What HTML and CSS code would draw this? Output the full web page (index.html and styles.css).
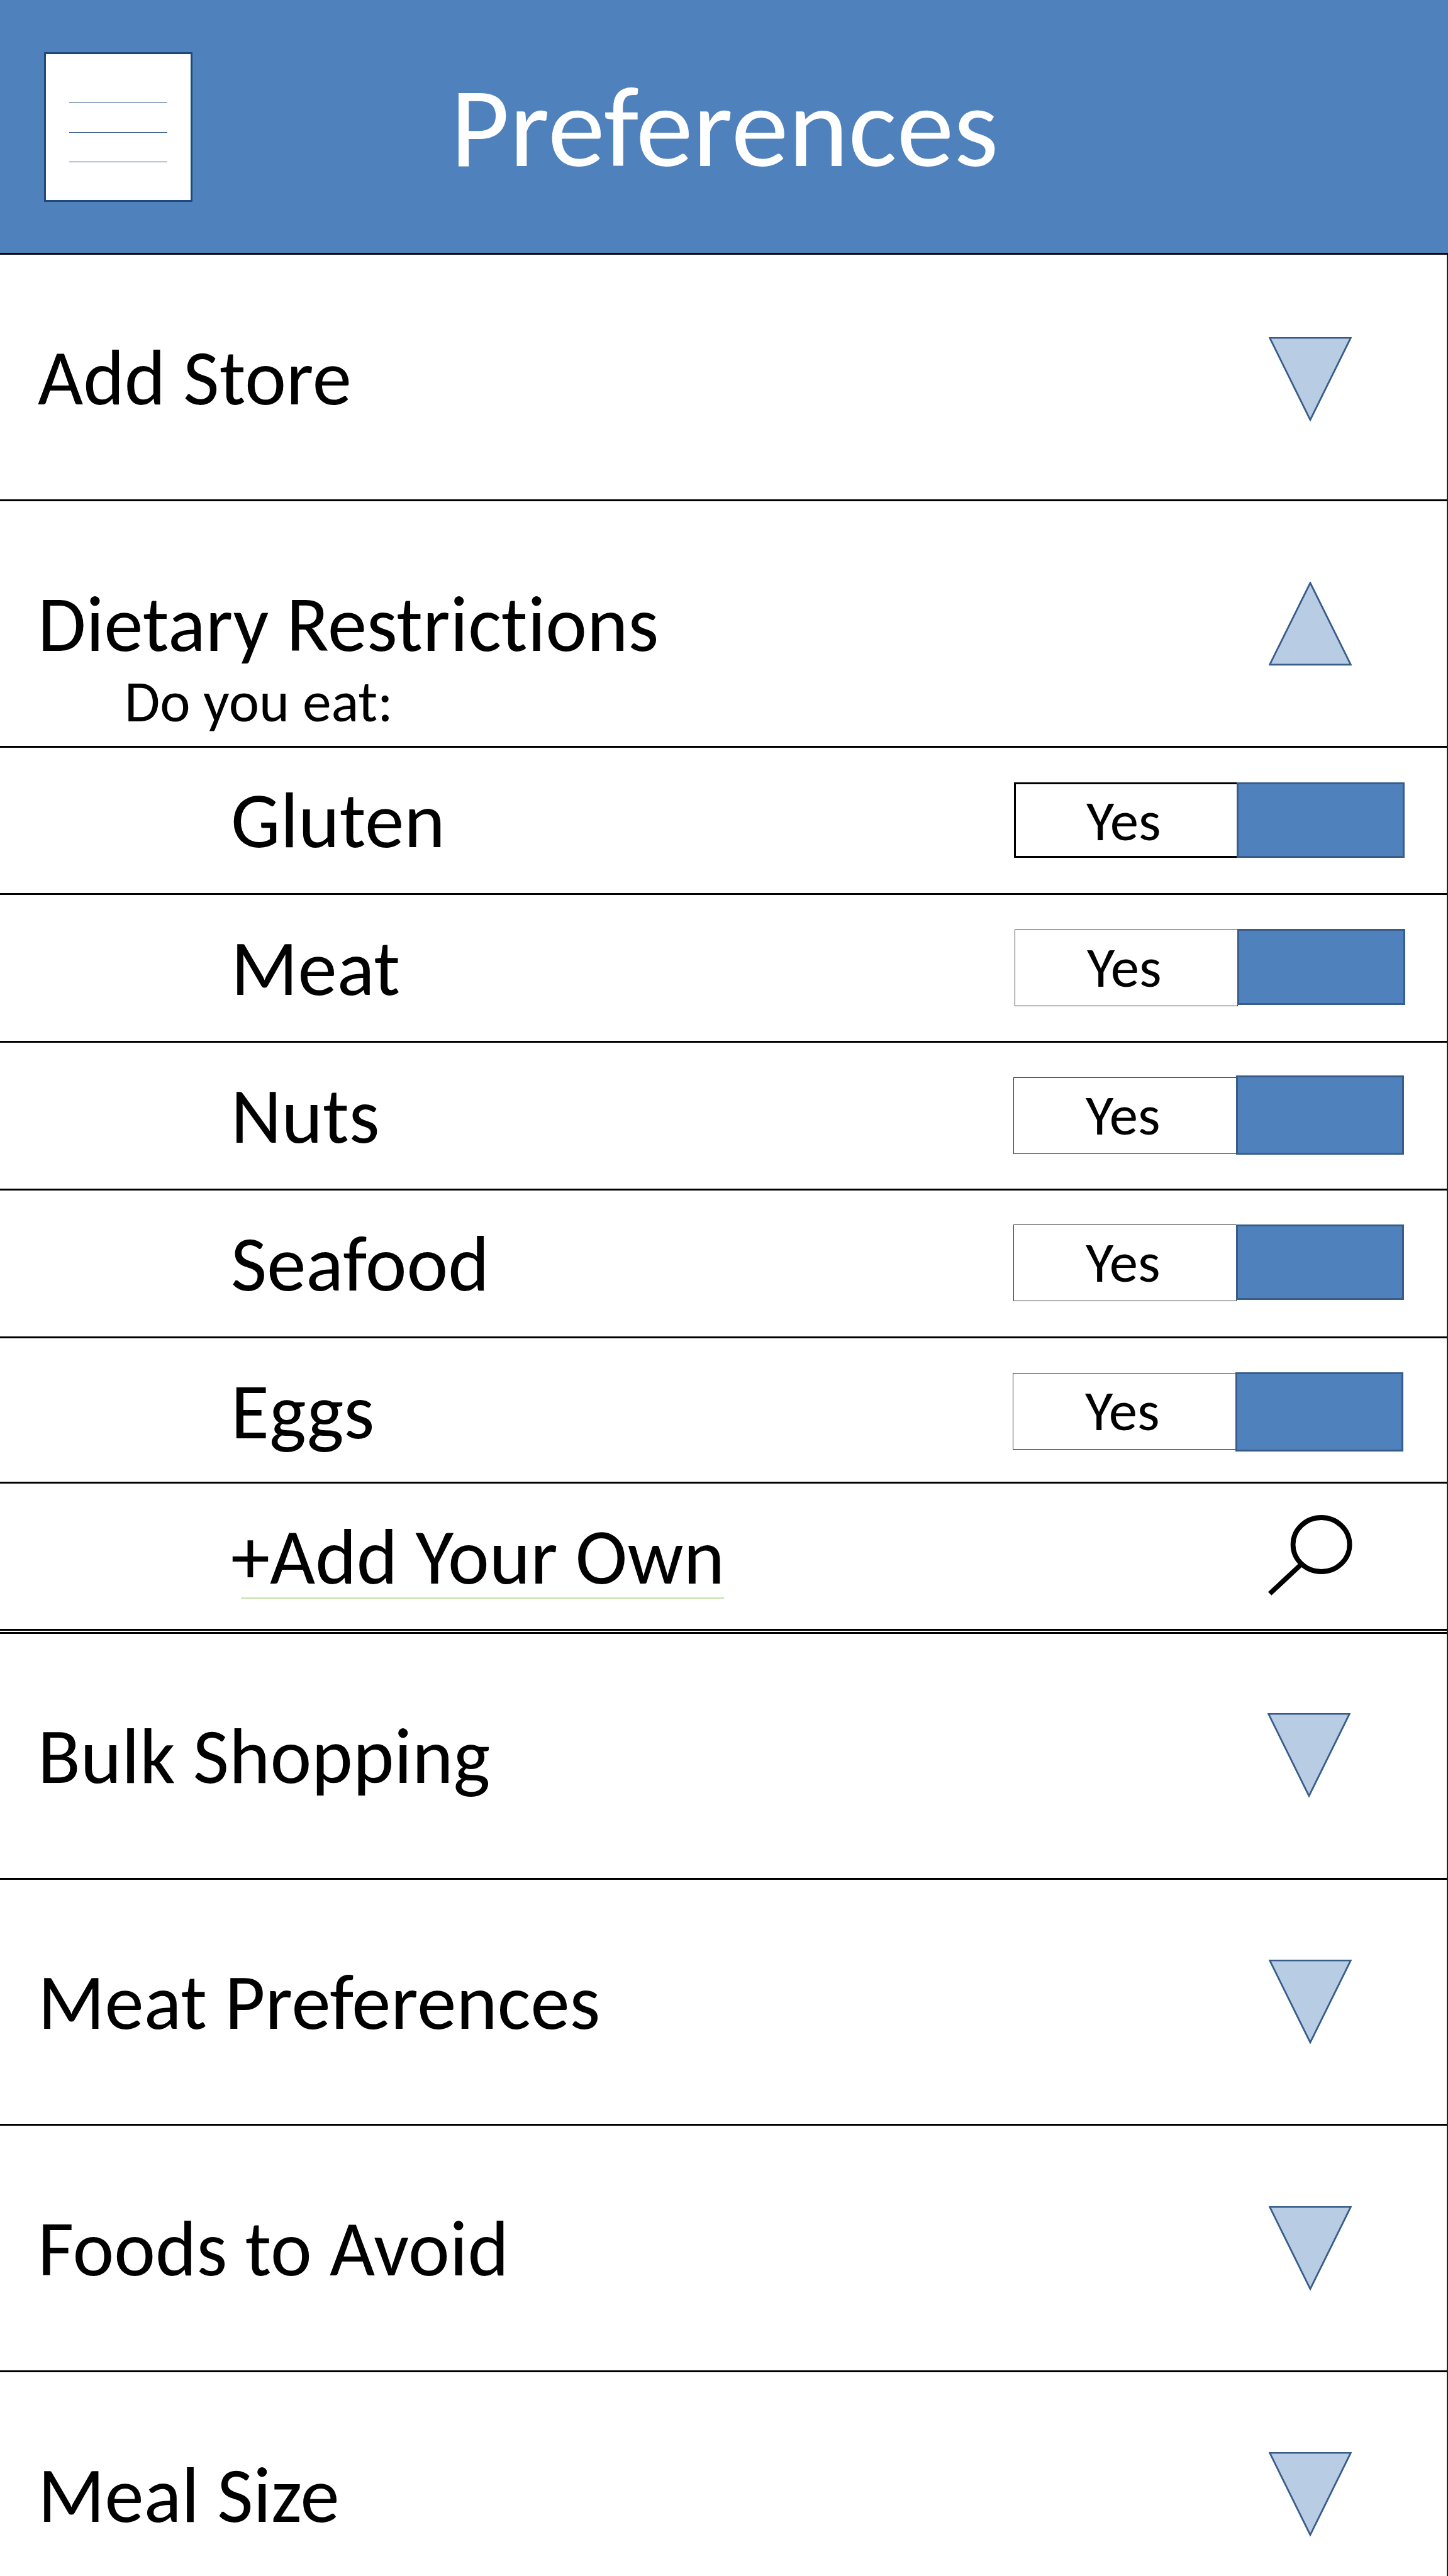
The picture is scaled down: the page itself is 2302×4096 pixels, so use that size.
FILE: index.html
```
<!DOCTYPE html>
<html lang="en">
<head>
<meta charset="utf-8">
<title>Preferences</title>
<link rel="stylesheet" href="styles.css">
</head>
<body>
<svg class="defs" aria-hidden="true">
  <symbol id="down" viewBox="0 0 132 134"><path d="M1.6 1.2H130.4L66 131.6Z"/></symbol>
  <symbol id="up" viewBox="0 0 132 134"><path d="M1.6 131.8H130.4L66 1.8Z"/></symbol>
</svg>
<header class="header">
  <button class="menu" aria-label="Menu"><span></span><span></span><span></span></button>
  <h1 class="title">Preferences</h1>
</header>
<main class="list">
  <section class="row">
    <div class="label">Add Store</div>
    <svg class="arrow arrow-low"><use href="#down"/></svg>
  </section>
  <section class="row">
    <div>
      <div class="label">Dietary Restrictions</div>
      <div class="hint">Do you eat:</div>
    </div>
    <svg class="arrow arrow-open"><use href="#up"/></svg>
  </section>
  <section class="row sub gluten">
    <div class="label">Gluten</div>
    <div class="toggle"><div class="value">Yes</div><div class="thumb"></div></div>
  </section>
  <section class="row sub meat">
    <div class="label">Meat</div>
    <div class="toggle"><div class="value">Yes</div><div class="thumb"></div></div>
  </section>
  <section class="row sub nuts">
    <div class="label">Nuts</div>
    <div class="toggle"><div class="value">Yes</div><div class="thumb"></div></div>
  </section>
  <section class="row sub seafood">
    <div class="label">Seafood</div>
    <div class="toggle"><div class="value">Yes</div><div class="thumb"></div></div>
  </section>
  <section class="row sub eggs">
    <div class="label">Eggs</div>
    <div class="toggle"><div class="value">Yes</div><div class="thumb"></div></div>
  </section>
  <section class="row sub add">
    <div>
      <div class="label">+Add Your Own</div>
      <div class="underline"></div>
    </div>
    <svg class="search" viewBox="0 0 138 138"><ellipse cx="86.6" cy="55" rx="45" ry="43"/><path d="M54 87L4.7 133"/></svg>
  </section>
  <section class="row bulk">
    <div class="label">Bulk Shopping</div>
    <svg class="arrow"><use href="#down"/></svg>
  </section>
  <section class="row meat-prefs">
    <div class="label">Meat Preferences</div>
    <svg class="arrow"><use href="#down"/></svg>
  </section>
  <section class="row foods">
    <div class="label">Foods to Avoid</div>
    <svg class="arrow arrow-open"><use href="#down"/></svg>
  </section>
  <section class="row last">
    <div class="label">Meal Size</div>
    <svg class="arrow"><use href="#down"/></svg>
  </section>
</main>
</body>
</html>
```
FILE: styles.css
```
* { box-sizing: border-box; }

body {
  margin: 0;
  width: 2302px;
  height: 4096px;
  overflow: hidden;
  background: #fff;
  color: #000;
  font-family: Carlito, Calibri, "Open Sans", sans-serif;
  font-variant-ligatures: none;
}

.defs { display: none; }

.header {
  display: flex;
  align-items: flex-start;
  height: 405px;
  padding-left: 70px;
  background: #4f81bd;
  border-bottom: 3px solid #000;
}

.menu {
  display: flex;
  flex-direction: column;
  gap: 46px;
  width: 236px;
  height: 238px;
  margin: 83px 0 0;
  padding: 77px 37px 0;
  background: #fff;
  border: 3px solid #1f497d;
}
.menu span { height: 1px; background: #1f497d; }

.title {
  margin: 91px 0 0 410px;
  color: #fff;
  font-size: 182px;
  font-weight: 400;
  line-height: 223px;
}

.list { border-right: 2px solid #222; }

.row {
  display: flex;
  align-items: flex-start;
  justify-content: space-between;
  height: 392px;
  padding-left: 60px;
  border-bottom: 3px solid #000;
}
.label {
  padding-top: 119px;
  font-size: 124.7px;
  line-height: 153px;
  white-space: nowrap;
}
.hint {
  margin: -9px 0 0 138px;
  font-size: 91.6px;
  line-height: 113px;
}

.arrow {
  width: 132px;
  height: 134px;
  margin: 127px 151px 0 0;
  overflow: visible;
  fill: #b8cce4;
  stroke: #385d8a;
  stroke-width: 2.8;
}
.arrow-low { margin-top: 131px; }
.arrow-open { margin-top: 128px; }

.sub { height: 235px; padding-left: 367px; }
.sub .label { padding-top: 40px; }

.toggle { display: flex; align-items: flex-start; margin-right: 68px; }
.value {
  width: 355px;
  height: 122px;
  margin-top: 55px;
  padding: 3px 0 0 114px;
  border: 1px solid #333;
  font-size: 91px;
  line-height: 112px;
}
.thumb {
  width: 267px;
  height: 120px;
  margin: 54px 0 0 -1px;
  background: #4f81bd;
  border: 3px solid #385d8a;
}

.gluten { height: 234px; }
.gluten .label { padding-top: 39px; }
.gluten .toggle { margin-right: 67px; }
.gluten .value { width: 357px; height: 120px; border: 3px solid #000; padding: 2px 0 0 112px; }
.gluten .thumb { margin: 55px 0 0 -3px; }
.meat .toggle { margin-right: 66px; }
.meat .thumb { height: 121px; }
.nuts .thumb { height: 126px; margin-top: 52px; }
.seafood .value { margin-top: 54px; }
.eggs { height: 231px; }
.eggs .toggle { margin-right: 69px; }
.eggs .thumb { height: 126px; }

.add { height: 234px; }
.underline {
  width: 768px;
  height: 2px;
  margin: -12px 0 0 16px;
  background: #c3e0a4;
}
.search {
  width: 138px;
  height: 138px;
  margin: 42px 148px 0 0;
  fill: none;
  stroke: #000;
  stroke-width: 7.8;
}

.bulk { height: 394px; margin-top: 2px; border-top: 3px solid #000; }
.bulk .label { padding-top: 118px; }
.bulk .arrow { margin: 126px 153px 0 0; }
.meat-prefs { height: 391px; }
.meat-prefs .label { padding-top: 118px; }
.last { height: 324px; border-bottom: 0; }
```
